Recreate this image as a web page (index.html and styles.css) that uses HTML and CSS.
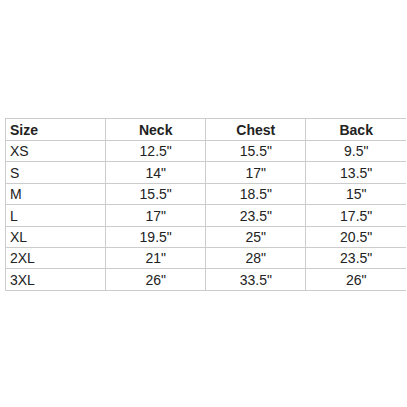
FILE: index.html
```html
<!DOCTYPE html>
<html>
<head>
<meta charset="utf-8">
<link rel="stylesheet" href="styles.css">
</head>
<body>
<div class="page">
<table class="sizes">
<colgroup>
<col class="c1"><col class="c"><col class="c"><col class="c">
</colgroup>
<thead>
<tr><th class="first">Size</th><th>Neck</th><th>Chest</th><th>Back</th></tr>
</thead>
<tbody>
<tr class="odd"><td class="first">XS</td><td>12.5"</td><td>15.5"</td><td>9.5"</td></tr>
<tr class="even"><td class="first">S</td><td>14"</td><td>17"</td><td>13.5"</td></tr>
<tr class="odd"><td class="first">M</td><td>15.5"</td><td>18.5"</td><td>15"</td></tr>
<tr class="even"><td class="first">L</td><td>17"</td><td>23.5"</td><td>17.5"</td></tr>
<tr class="odd"><td class="first">XL</td><td>19.5"</td><td>25"</td><td>20.5"</td></tr>
<tr class="odd"><td class="first">2XL</td><td>21"</td><td>28"</td><td>23.5"</td></tr>
<tr class="even"><td class="first">3XL</td><td>26"</td><td>33.5"</td><td>26"</td></tr>
</tbody>
</table>
</div>
</body>
</html>
```
FILE: styles.css
```css
html, body {
  margin: 0;
  padding: 0;
  background: #ffffff;
}
.page {
  width: 407px;
  height: 407px;
  padding: 118px 0 0 5px;
  box-sizing: border-box;
}
.sizes {
  border-collapse: collapse;
  table-layout: fixed;
  width: 401px;
  font-family: "Liberation Sans", Arial, sans-serif;
  font-size: 14px;
  color: #222222;
}
.sizes col.c1 { width: 100px; }
.sizes col.c { width: 100px; }
.sizes th, .sizes td {
  border: 1px solid #cccccc;
  padding: 0;
  text-align: center;
  vertical-align: middle;
  line-height: 16px;
  box-sizing: border-box;
}
.sizes th {
  font-weight: bold;
  height: 22px;
}
.sizes tr.odd td { height: 21px; }
.sizes tr.even td { height: 22px; }
.sizes .first {
  text-align: left;
  padding-left: 4px;
}
.sizes th:last-child, .sizes td:last-child { border-right: none; }
```
